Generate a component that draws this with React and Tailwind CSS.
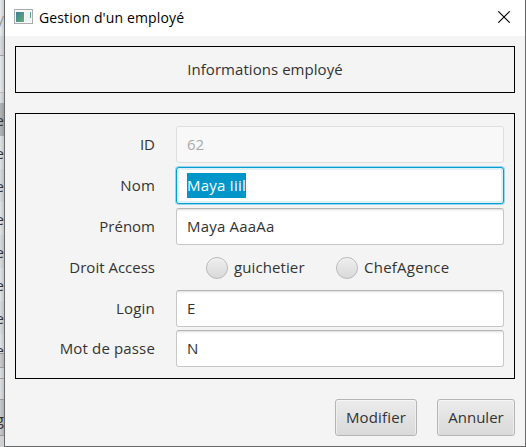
const FONT = "font-['Open_Sans','Noto_Sans',sans-serif]";

function Row({ label, track, height, children }) {
  return (
    <div className={`flex items-center ${height}`}>
      <div className="w-[139px] shrink-0 pb-px text-right">
        <span className={track}>{label}</span>
      </div>
      <div className="ml-[21px] flex w-[328px] items-center">{children}</div>
    </div>
  );
}

const field =
  "flex h-[37px] w-full items-center rounded-[3px] border border-[#c8c8c8] border-t-[#b5b5b5] bg-white px-[10px] pb-px shadow-[inset_0_3px_2px_-2px_#dcdcdc]";

const button =
  "flex h-[37px] items-center justify-center rounded-[3px] border border-[#b5b5b5] bg-linear-to-b from-[#ececec] to-[#d9d9d9] pb-px shadow-[inset_0_1px_0_#f6f6f6,inset_1px_0_0_#eeeeee,inset_-1px_0_0_#eeeeee]";

function Radio({ label, track }) {
  return (
    <div className="flex items-center gap-[6px]">
      <span className="size-[22px] rounded-full border border-[#b9b9b9] bg-linear-to-b from-[#eeeeee] to-[#d9d9d9] shadow-[inset_0_1px_0_#f6f6f6]" />
      <span className={`pb-px ${track}`}>{label}</span>
    </div>
  );
}

// Slice of the parent window that shows along the dialog's left edge.
const slices = [
  ["h-[36px] bg-linear-to-r from-[#e9eaec] to-[#c9cacc] text-[#999]", "y"],
  ["h-[20px] bg-linear-to-r from-[#dcdddf] to-[#bfc0c2] border-b border-[#a0a0a2]", ""],
  ["h-[37px] bg-linear-to-r from-[#e7e8ea] to-[#c8c9cb] border-b border-[#bbb]", ""],
  ["h-[10px] bg-linear-to-r from-[#dedfe1] to-[#c0c1c3]", ""],
  ["h-[33px] bg-linear-to-r from-[#b4b5b7] to-[#9b9c9e]", "e"],
  ["h-[33px] bg-linear-to-r from-[#e2e3e5] to-[#c4c5c7]", "e"],
  ["h-[33px] bg-linear-to-r from-[#dadbdd] to-[#bebfc1]", "e"],
  ["h-[33px] bg-linear-to-r from-[#e2e3e5] to-[#c4c5c7]", "e"],
  ["h-[33px] bg-linear-to-r from-[#dadbdd] to-[#bebfc1]", "e"],
  ["h-[33px] bg-linear-to-r from-[#e2e3e5] to-[#c4c5c7]", "e"],
  ["h-[33px] bg-linear-to-r from-[#dadbdd] to-[#bebfc1]", "e"],
  ["h-[20px] bg-linear-to-r from-[#e2e3e5] to-[#c4c5c7] border-b border-[#999] pt-[12px]", "e"],
  ["h-[14px] bg-linear-to-r from-[#cbcccd] to-[#aeafb0] border-b border-[#999]", ""],
  ["h-[11px] bg-linear-to-r from-[#dfe0e2] to-[#c2c3c5] border-b border-[#999]", ""],
  ["h-[21px] bg-linear-to-r from-[#dedfe1] to-[#c2c3c5] border-b border-[#999]", ""],
  ["h-[36px] bg-linear-to-r from-[#c9cacb] to-[#aeafb0] border-b border-[#999] pt-[2px]", "g"],
  ["h-[12px] bg-[#d0d1d3]", ""],
];

export default function App() {
  return (
    <div className={`flex h-[447px] w-[526px] overflow-hidden bg-[#f4f4f4] text-[15px] leading-5 text-[#333] ${FONT}`}>
      <div className="w-1 shrink-0 overflow-hidden">
        {slices.map(([cls, t], i) => (
          <div key={i} className={`flex items-center justify-end overflow-hidden ${cls}`}>
            <span>{t}</span>
          </div>
        ))}
      </div>
      <div className="flex w-[522px] shrink-0 flex-col border-x border-b border-[#68696b]">
        <div className="flex h-9 shrink-0 items-center bg-white pl-[9px] pr-[15px] text-black">
          <svg width="19" height="15" viewBox="0 0 19 15" className="mb-[3px] shrink-0">
            <defs>
              <linearGradient id="pane" x1="0" y1="0" x2="1" y2="1">
                <stop offset="0" stopColor="#3f7f98" />
                <stop offset="1" stopColor="#5fae72" />
              </linearGradient>
            </defs>
            <rect x=".5" y=".5" width="18" height="14" fill="#f7f7f7" stroke="#a9adb2" />
            <rect x="2" y="3" width="8" height="10" fill="url(#pane)" />
            <rect x="11" y="3" width="6" height="10" fill="#edf2f5" />
            <rect x="16" y="3" width="1" height="6" fill="#58a98a" />
          </svg>
          <span className="ml-[6px] text-[14px] tracking-[0.13px]">Gestion d'un employé</span>
          <svg width="12" height="12" viewBox="0 0 12 12" className="mb-[2px] ml-auto">
            <path d="M.3.3 11.7 11.7M11.7.3.3 11.7" stroke="#000" strokeWidth="1.1" />
          </svg>
        </div>
        <div className="mx-[10px] mt-[10px] flex h-[47px] w-[500px] shrink-0 items-center justify-center border border-black pb-px">
          <span className="tracking-[0.05px]">Informations employé</span>
        </div>
        <div className="mx-[10px] mt-5 flex h-[266px] w-[500px] shrink-0 flex-col border border-black pt-[10px]">
          <Row label="ID" track="" height="h-[41px]">
            <div className="flex h-[37px] w-full items-center rounded-[3px] border border-[#dfdfdf] bg-[#f8f8f8] px-[10px] pb-px text-[#aaa]">62</div>
          </Row>
          <Row label="Nom" track="tracking-[0.2px]" height="h-[41px]">
            <div className="flex h-[37px] w-full items-center rounded-[3px] border border-[#039ed3] bg-white px-[10px] pb-px shadow-[0_0_0_1px_#9bd5ea,inset_0_0_0_2px_#dff1f8]">
              <span className="flex h-[25px] items-center bg-[#0096c9] tracking-[0.2px] text-white">Maya Iiil</span>
            </div>
          </Row>
          <Row label="Prénom" track="" height="h-[41px]">
            <div className={`${field} tracking-[0.2px]`}>Maya AaaAa</div>
          </Row>
          <Row label="Droit Access" track="" height="h-[41px]">
            <div className="flex pl-[30px]">
              <div className="w-[130px]"><Radio label="guichetier" track="tracking-[0.1px]" /></div>
              <Radio label="ChefAgence" track="tracking-[0.25px]" />
            </div>
          </Row>
          <Row label="Login" track="tracking-[0.2px]" height="h-[41px]">
            <div className={field}>E</div>
          </Row>
          <Row label="Mot de passe" track="tracking-[0.15px]" height="h-[39px]">
            <div className={field}>N</div>
          </Row>
        </div>
        <div className="mt-5 flex shrink-0 justify-end gap-5 pr-[10px]">
          <div className={`${button} w-[82px] tracking-[0.15px]`}>Modifier</div>
          <div className={`${button} w-[78px]`}>Annuler</div>
        </div>
      </div>
    </div>
  );
}
